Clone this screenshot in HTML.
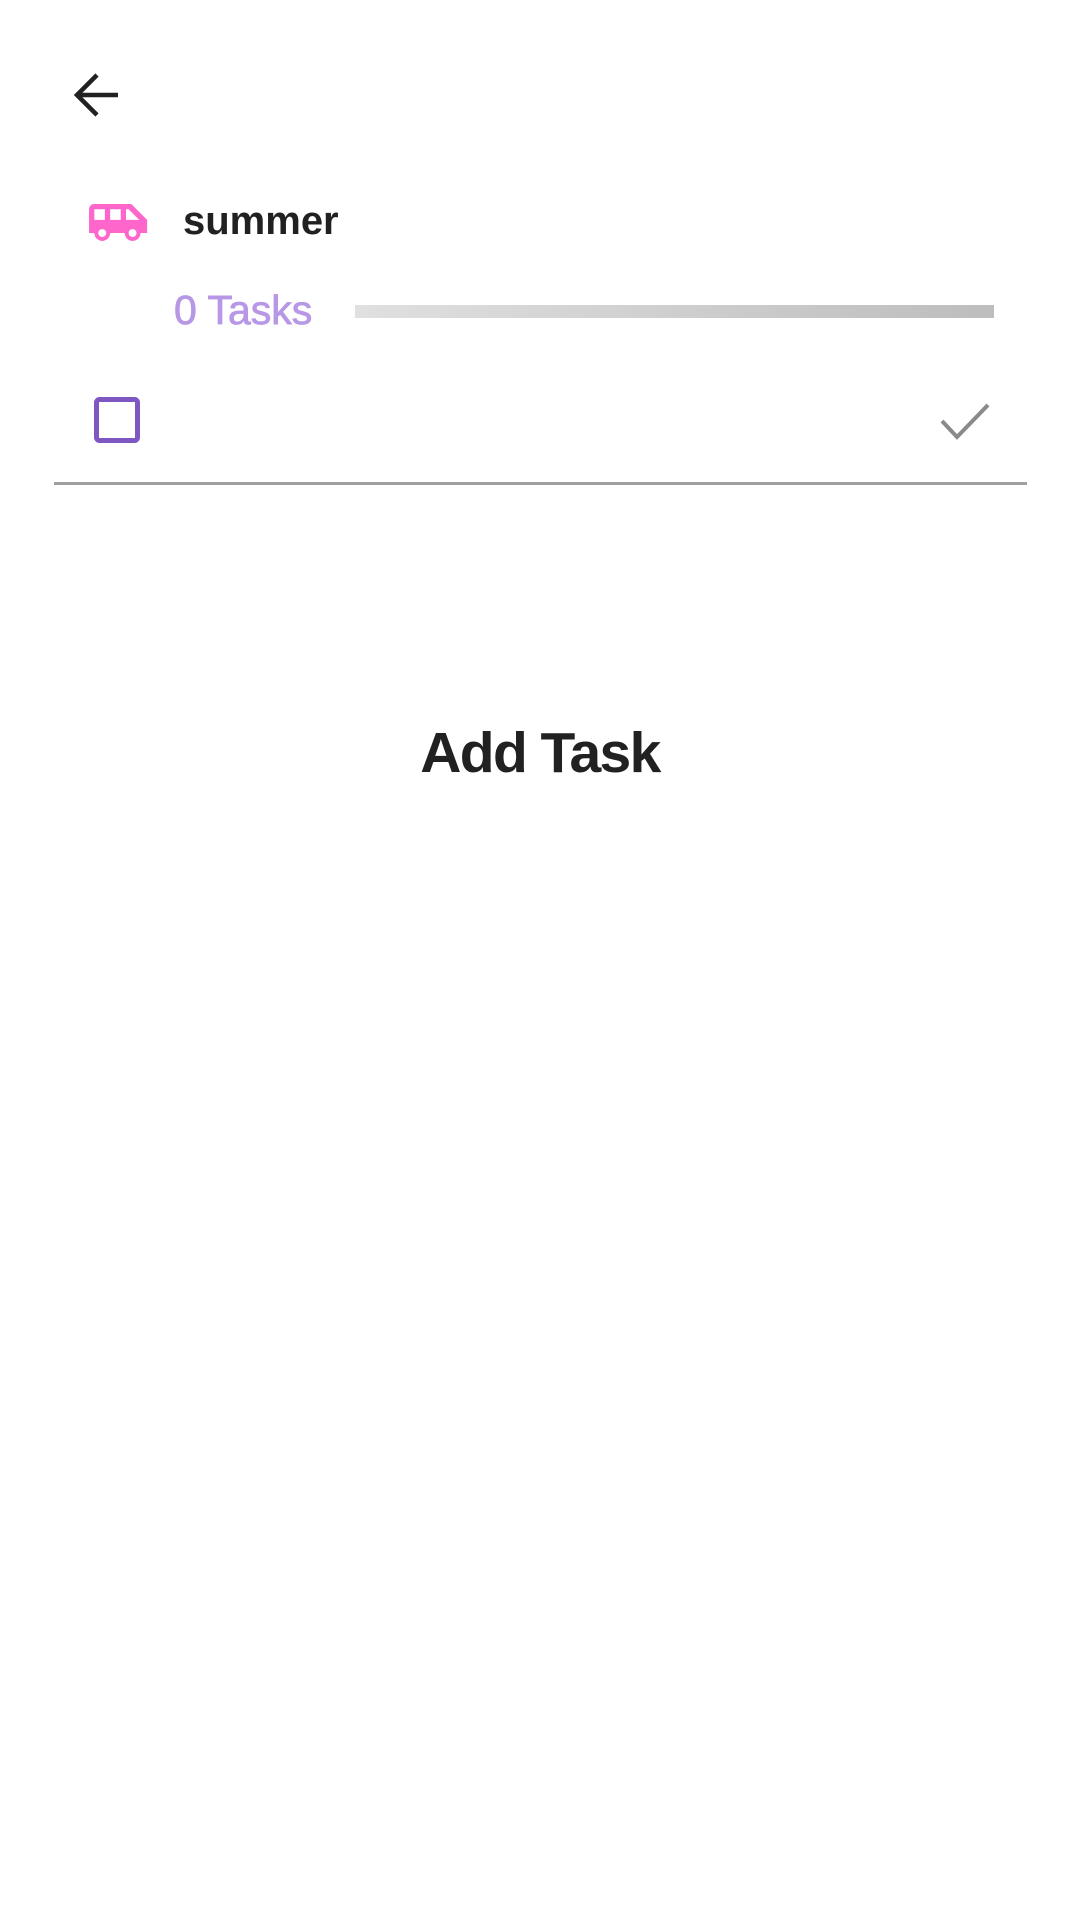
<!DOCTYPE html>
<html><head><meta charset="utf-8"><style>
html,body{margin:0;padding:0;background:#fff;width:1080px;height:1920px;overflow:hidden;position:relative;font-family:"Liberation Sans",sans-serif}
.abs{position:absolute}
</style></head><body>
<svg class="abs" style="left:0;top:0" width="1080" height="520">
  <polyline points="97,75 77,95 97,115" fill="none" stroke="#212121" stroke-width="4.5"/>
  <line x1="77" y1="95" x2="118" y2="95" stroke="#212121" stroke-width="4.5"/>
  <g transform="translate(86.4,190.8) scale(2.64)" fill="#ff66cc">
    <path d="M17 5H3c-1.1 0-2 .89-2 2v9h2c0 1.65 1.34 3 3 3s3-1.35 3-3h5.5c0 1.65 1.34 3 3 3s3-1.35 3-3H23v-5l-6-6zM3 11V7h4v4H3zm3 6.5c-.83 0-1.5-.67-1.5-1.5s.67-1.5 1.5-1.5 1.5.67 1.5 1.5-.67 1.5-1.5 1.5zM13 11H9V7h4v4zm4.5 6.5c-.83 0-1.5-.67-1.5-1.5s.67-1.5 1.5-1.5 1.5.67 1.5 1.5-.67 1.5-1.5 1.5zM15 11V7h1l4 4h-5z"/>
  </g>
  <defs><linearGradient id="g" x1="0" x2="1"><stop offset="0" stop-color="#e0e0e0"/><stop offset="1" stop-color="#bdbdbd"/></linearGradient></defs>
  <rect x="355" y="305" width="639" height="13" fill="url(#g)"/>
  <rect x="96.5" y="399.5" width="41" height="41" rx="3" fill="none" stroke="#7e57c2" stroke-width="5"/>
  <polyline points="942,421 957,437 988,405" fill="none" stroke="#8a8a8a" stroke-width="4"/>
  <rect x="54" y="482" width="973" height="3" fill="#a0a0a0"/>
</svg>
<div class="abs" style="left:183px;top:196px;font-size:40px;font-weight:bold;color:#212121;line-height:50px">summer</div>
<div class="abs" style="left:174px;top:285px;font-size:41px;color:#b797e6;line-height:50px;-webkit-text-stroke:0.8px #b797e6">0 Tasks</div>
<div class="abs" style="left:0;width:1080px;top:718px;text-align:center;font-size:57px;font-weight:bold;color:#212121;line-height:70px;letter-spacing:-1.6px">Add Task</div>
</body></html>
